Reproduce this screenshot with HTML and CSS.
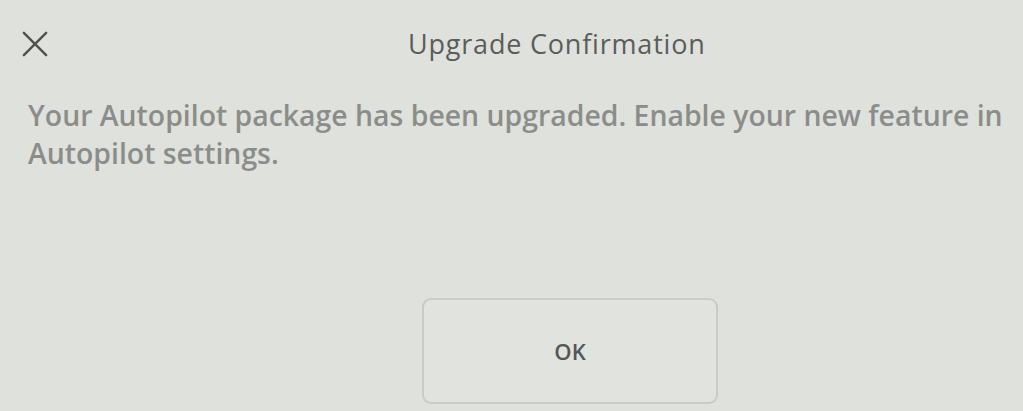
FILE: index.html
```html
<!DOCTYPE html>
<html lang="en">
<head>
    <meta charset="UTF-8">
    <title>Upgrade Confirmation</title>
    <link rel="stylesheet" href="styles.css">
</head>
<body>
    <div class="dialog">
        <!-- Header -->
        <div class="dialog-header">
            <button class="close-btn" aria-label="Close">
                <svg width="28" height="28" viewBox="0 0 28 28">
                    <path d="M2 2 L26 26 M26 2 L2 26" stroke="#4f514f" stroke-width="2.6" stroke-linecap="round" fill="none"/>
                </svg>
            </button>
            <div class="dialog-title">Upgrade Confirmation</div>
        </div>

        <!-- Message -->
        <p class="dialog-message">
            Your Autopilot package has been upgraded. Enable your new feature in Autopilot settings.
        </p>

        <!-- Actions -->
        <div class="dialog-actions">
            <button class="ok-btn">OK</button>
        </div>
    </div>
</body>
</html>
```

FILE: styles.css
```css
* {
    margin: 0;
    padding: 0;
    box-sizing: border-box;
}

body {
    font-family: 'Open Sans', 'Liberation Sans', sans-serif;
    background: #dfe1dc;
    width: 1023px;
    height: 411px;
    overflow: hidden;
}

.dialog {
    padding: 0 0 0 22px;
}

.dialog-header {
    display: flex;
    align-items: center;
    height: 90px;
    padding-bottom: 3px;
}

.close-btn {
    background: none;
    border: none;
    width: 26px;
    height: 26px;
    display: flex;
    align-items: center;
    justify-content: center;
}

.close-btn svg {
    width: 26px;
    height: 26px;
}

.dialog-title {
    margin-left: 360px;
    font-size: 27px;
    color: #5b5d5b;
    letter-spacing: 0.8px;
}

.dialog-message {
    width: 990px;
    padding-left: 6px;
    margin-top: 6px;
    font-size: 28.4px;
    line-height: 38px;
    color: #8b8d8a;
    font-weight: 600;
}

.dialog-actions {
    display: flex;
    padding-left: 400px;
    margin-top: 126px;
}

.ok-btn {
    width: 296px;
    height: 106px;
    background: #e1e3de;
    border: 2px solid #c9cbc6;
    border-radius: 9px;
    font-family: inherit;
    font-size: 22px;
    font-weight: 600;
    color: #555755;
}
```
